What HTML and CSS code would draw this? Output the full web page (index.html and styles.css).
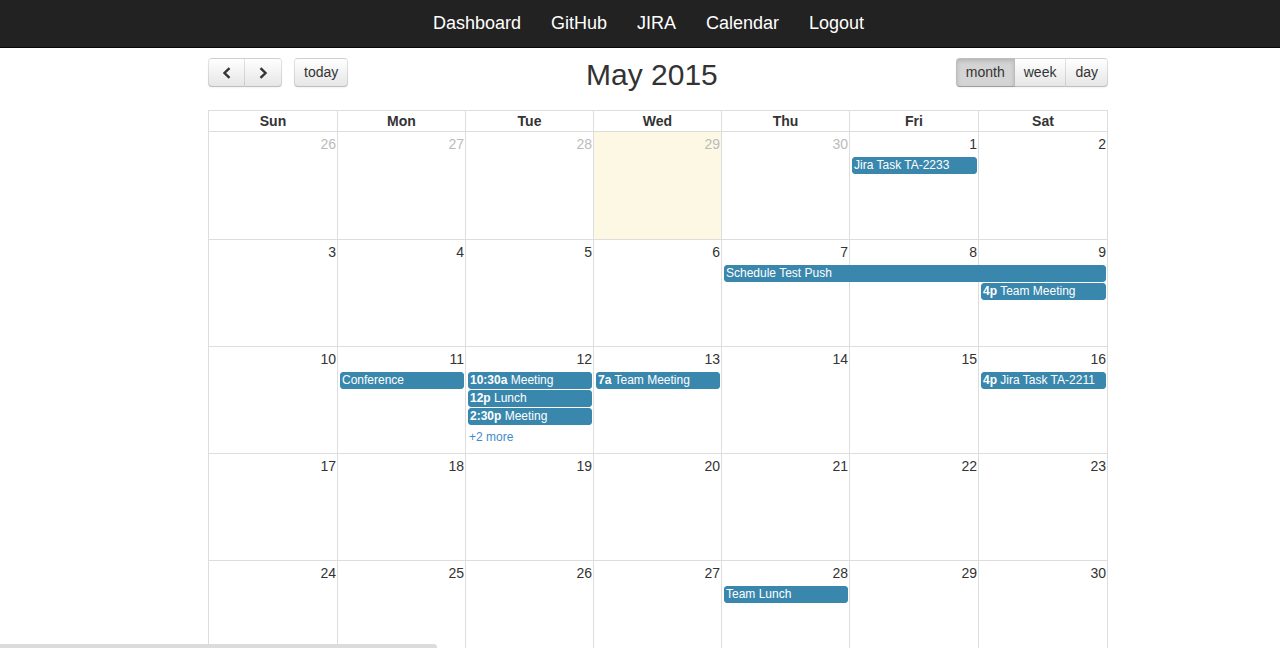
FILE: index.html
```html
<!DOCTYPE html>
<html>
<head>
<meta charset="utf-8">
<title>Calendar</title>
<link rel="stylesheet" href="styles.css">
</head>
<body>
<nav class="navbar">
  <ul class="nav">
    <li><a href="#">Dashboard</a></li>
    <li><a href="#">GitHub</a></li>
    <li><a href="#">JIRA</a></li>
    <li><a href="#">Calendar</a></li>
    <li><a href="#">Logout</a></li>
  </ul>
</nav>

<div class="calendar">
  <div class="toolbar">
    <div class="tb-left">
      <div class="btn-group">
        <button class="btn btn-icon" type="button"><svg width="10" height="12" viewBox="0 0 10 12"><polyline points="7.5,1.2 2.5,6 7.5,10.8" fill="none" stroke="#333" stroke-width="2.4"/></svg></button><button class="btn btn-icon" type="button"><svg width="10" height="12" viewBox="0 0 10 12"><polyline points="2.5,1.2 7.5,6 2.5,10.8" fill="none" stroke="#333" stroke-width="2.4"/></svg></button>
      </div>
      <button class="btn btn-single" type="button">today</button>
    </div>
    <div class="tb-center"><h2 class="title">May 2015</h2></div>
    <div class="btn-group">
      <button class="btn active" type="button">month</button><button class="btn" type="button">week</button><button class="btn" type="button">day</button>
    </div>
  </div>

  <div class="grid">
    <div class="head">
      <div class="th">Sun</div><div class="th">Mon</div><div class="th">Tue</div><div class="th">Wed</div><div class="th">Thu</div><div class="th">Fri</div><div class="th">Sat</div>
    </div>

    <div class="week first">
      <div class="bg c1"></div><div class="bg c2"></div><div class="bg c3"></div><div class="bg c4 today"></div><div class="bg c5"></div><div class="bg c6"></div><div class="bg c7"></div>
      <div class="num c1 other">26</div><div class="num c2 other">27</div><div class="num c3 other">28</div><div class="num c4 other">29</div><div class="num c5 other">30</div><div class="num c6">1</div><div class="num c7">2</div>
      <div class="ev c6 r2">Jira Task TA-2233</div>
    </div>

    <div class="week">
      <div class="bg c1"></div><div class="bg c2"></div><div class="bg c3"></div><div class="bg c4"></div><div class="bg c5"></div><div class="bg c6"></div><div class="bg c7"></div>
      <div class="num c1">3</div><div class="num c2">4</div><div class="num c3">5</div><div class="num c4">6</div><div class="num c5">7</div><div class="num c6">8</div><div class="num c7">9</div>
      <div class="ev c5 span3 r2">Schedule Test Push</div>
      <div class="ev c7 r3"><b>4p</b> Team Meeting</div>
    </div>

    <div class="week">
      <div class="bg c1"></div><div class="bg c2"></div><div class="bg c3"></div><div class="bg c4"></div><div class="bg c5"></div><div class="bg c6"></div><div class="bg c7"></div>
      <div class="num c1">10</div><div class="num c2">11</div><div class="num c3">12</div><div class="num c4">13</div><div class="num c5">14</div><div class="num c6">15</div><div class="num c7">16</div>
      <div class="ev c2 r2">Conference</div>
      <div class="ev c3 r2"><b>10:30a</b> Meeting</div>
      <div class="ev c3 r3"><b>12p</b> Lunch</div>
      <div class="ev c3 r4"><b>2:30p</b> Meeting</div>
      <a class="more c3 r5" href="#">+2 more</a>
      <div class="ev c4 r2"><b>7a</b> Team Meeting</div>
      <div class="ev c7 r2"><b>4p</b> Jira Task TA-2211</div>
    </div>

    <div class="week">
      <div class="bg c1"></div><div class="bg c2"></div><div class="bg c3"></div><div class="bg c4"></div><div class="bg c5"></div><div class="bg c6"></div><div class="bg c7"></div>
      <div class="num c1">17</div><div class="num c2">18</div><div class="num c3">19</div><div class="num c4">20</div><div class="num c5">21</div><div class="num c6">22</div><div class="num c7">23</div>
    </div>

    <div class="week">
      <div class="bg c1"></div><div class="bg c2"></div><div class="bg c3"></div><div class="bg c4"></div><div class="bg c5"></div><div class="bg c6"></div><div class="bg c7"></div>
      <div class="num c1">24</div><div class="num c2">25</div><div class="num c3">26</div><div class="num c4">27</div><div class="num c5">28</div><div class="num c6">29</div><div class="num c7">30</div>
      <div class="ev c5 r2">Team Lunch</div>
    </div>

    <div class="week">
      <div class="bg c1"></div><div class="bg c2"></div><div class="bg c3"></div><div class="bg c4"></div><div class="bg c5"></div><div class="bg c6"></div><div class="bg c7"></div>
      <div class="num c1">31</div><div class="num c2 other">1</div><div class="num c3 other">2</div><div class="num c4 other">3</div><div class="num c5 other">4</div><div class="num c6 other">5</div><div class="num c7 other">6</div>
    </div>
  </div>
</div>

<div class="scroll-thumb"></div>
</body>
</html>
```

FILE: styles.css
```css
html, body {
  margin: 0;
  padding: 0;
  background: #fff;
  font-family: "Liberation Sans", Arial, sans-serif;
  color: #333;
  font-size: 14px;
}

.navbar {
  height: 47px;
  background: #222;
  border-bottom: 1px solid #080808;
}

.nav {
  list-style: none;
  margin: 0;
  padding: 0 0 0 17px;
  display: flex;
  justify-content: center;
}

.nav a {
  display: block;
  padding: 0 15px;
  line-height: 46px;
  font-size: 18px;
  color: #fff;
  text-decoration: none;
}

.calendar {
  width: 900px;
  margin: 10px 0 0 208px;
}

.toolbar {
  display: flex;
  align-items: center;
  height: 29px;
  margin-bottom: 23px;
}

.tb-left {
  display: flex;
  gap: 12px;
}

.tb-center {
  flex: 1;
  text-align: center;
}

.title {
  margin: 0;
  padding-top: 3px;
  font-size: 30px;
  font-weight: normal;
  line-height: 33px;
  color: #333;
}

.btn-group {
  display: flex;
}

.btn {
  height: 29px;
  margin: 0;
  padding: 0 9px;
  font-family: "Liberation Sans", Arial, sans-serif;
  font-size: 14px;
  color: #333;
  background: linear-gradient(#ffffff, #e6e6e6);
  border: 1px solid rgba(0, 0, 0, 0.1);
  border-bottom-color: rgba(0, 0, 0, 0.25);
  box-shadow: inset 0 1px 0 rgba(255, 255, 255, 0.2), 0 1px 2px rgba(0, 0, 0, 0.05);
  line-height: 27px;
  cursor: pointer;
}

.btn-group .btn {
  border-radius: 0;
}

.btn-group .btn + .btn {
  border-left: 0;
}

.btn-group .btn:first-child {
  border-radius: 4px 0 0 4px;
}

.btn-group .btn:last-child {
  border-radius: 0 4px 4px 0;
}

.btn-single {
  border-radius: 4px;
  width: 54px;
}

.btn-icon {
  width: 37px;
  display: flex;
  align-items: center;
  justify-content: center;
}

.btn.active {
  background: #d4d4d4;
  box-shadow: inset 0 2px 4px rgba(0, 0, 0, 0.15), 0 1px 2px rgba(0, 0, 0, 0.05);
}

.grid {
  border-left: 1px solid #ddd;
}

.head,
.week {
  display: grid;
  grid-template-columns: 129px 128px 128px 128px 128px 129px 129px;
}

.head {
  border-top: 1px solid #ddd;
  border-bottom: 1px solid #ddd;
}

.th {
  border-right: 1px solid #ddd;
  text-align: center;
  font-weight: bold;
  line-height: 20px;
}

.week {
  grid-template-rows: 24px repeat(4, 18px) 1fr;
  height: 107px;
  box-sizing: border-box;
  border-bottom: 1px solid #ddd;
}

.week.first {
  height: 108px;
}

.bg {
  grid-row: 1 / -1;
  border-right: 1px solid #ddd;
}

.bg.today {
  background: #fcf8e3;
}

.c1 { grid-column-start: 1; }
.c2 { grid-column-start: 2; }
.c3 { grid-column-start: 3; }
.c4 { grid-column-start: 4; }
.c5 { grid-column-start: 5; }
.c6 { grid-column-start: 6; }
.c7 { grid-column-start: 7; }
.span3 { grid-column-end: span 3; }

.r2 { grid-row: 2; }
.r3 { grid-row: 3; }
.r4 { grid-row: 4; }
.r5 { grid-row: 5; }

.num {
  grid-row: 1;
  text-align: right;
  padding: 2px 2px 2px 0;
  line-height: 20px;
  font-size: 14px;
  color: #333;
}

.num.other {
  color: #bbb;
}

.ev {
  margin: 1px 2px 0 2px;
  height: 17px;
  box-sizing: border-box;
  padding: 0 1px;
  background: #3a87ad;
  border: 1px solid #3a87ad;
  border-radius: 3px;
  color: #fff;
  font-size: 12px;
  line-height: 15px;
  white-space: nowrap;
  overflow: hidden;
}

.ev b {
  font-weight: bold;
}

.more {
  margin: 4px 0 0 3px;
  font-size: 12px;
  line-height: 17px;
  color: #428bca;
  text-decoration: none;
}

.scroll-thumb {
  position: fixed;
  left: 0;
  bottom: 0;
  width: 437px;
  height: 4px;
  background: #dcdcdc;
  border-top-right-radius: 3px;
}
```
